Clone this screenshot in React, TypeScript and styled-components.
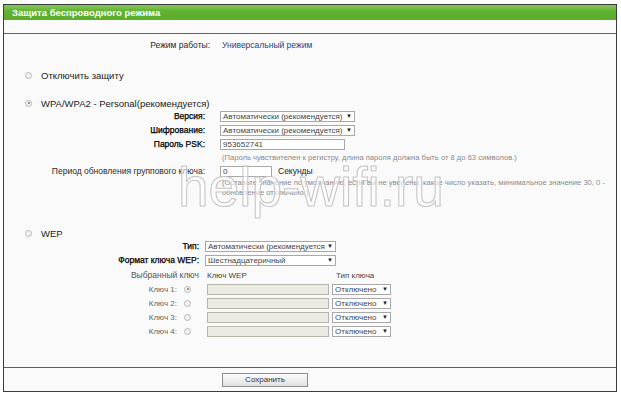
import React from 'react';
import styled, { createGlobalStyle } from 'styled-components';

const GlobalStyle = createGlobalStyle`
  html, body {
    margin: 0;
    padding: 0;
    background: #ffffff;
  }
  body {
    font-family: "Liberation Sans", Arial, sans-serif;
    color: #222;
  }
`;

const Page = styled.div`
  padding: 4px 0 0 3px;
`;

const Frame = styled.div`
  position: relative;
  width: 614px;
  height: 388px;
  box-sizing: border-box;
  border: 1px solid #3c3c3c;
  background: #fafafa;
  display: flex;
  flex-direction: column;
  overflow: hidden;
`;

const Header = styled.div`
  height: 15px;
  line-height: 15px;
  padding-left: 8px;
  background: linear-gradient(#86c85a, #62b232 40%, #5cad2c);
  color: #ffffff;
  font-size: 9.5px;
  font-weight: bold;
`;

const Separator = styled.div<{ $top: number }>`
  margin-top: ${(p) => p.$top}px;
  border-top: 1px solid #4d6b4d;
`;

const Row = styled.div<{ $labelW: number; $gap: number; $top?: number }>`
  display: grid;
  grid-template-columns: ${(p) => p.$labelW}px auto;
  column-gap: ${(p) => p.$gap}px;
  align-items: center;
  height: 14px;
  margin-top: ${(p) => p.$top ?? 0}px;
  font-size: 8.5px;
`;

const Label = styled.div<{ $strong?: boolean; $muted?: boolean }>`
  text-align: right;
  white-space: nowrap;
  color: ${(p) => (p.$strong ? '#000' : p.$muted ? '#555' : '#2a2a2a')};
  -webkit-text-stroke: ${(p) => (p.$strong ? '0.25px #000' : '0')};
`;

const Value = styled.div`
  color: #24468a;
  font-size: 8.5px;
`;

const Field = styled.div`
  display: flex;
  align-items: center;
  gap: 6px;
  white-space: nowrap;
`;

const Heading = styled.div<{ $top: number }>`
  display: flex;
  align-items: center;
  gap: 9px;
  height: 12px;
  margin-top: ${(p) => p.$top}px;
  padding-left: 21px;
  font-size: 9.5px;
  color: #222;
`;

const Radio = styled.span<{ $checked?: boolean }>`
  display: inline-block;
  position: relative;
  width: 5px;
  height: 5px;
  border-radius: 50%;
  border: 1px solid #b8b8b8;
  background: #f2f2f2;
  &::after {
    content: '';
    display: ${(p) => (p.$checked ? 'block' : 'none')};
    position: absolute;
    left: 1.5px;
    top: 1.5px;
    width: 2px;
    height: 2px;
    border-radius: 50%;
    background: #777;
  }
`;

const SelectBox = styled.div<{ $w: number }>`
  width: ${(p) => p.$w}px;
  height: 11px;
  box-sizing: border-box;
  border: 1px solid #a8a8a8;
  background: #ffffff;
  display: flex;
  align-items: center;
  font-size: 8px;
  color: #444;
  padding-left: 2px;
  overflow: hidden;
  span {
    flex: 1;
    overflow: hidden;
    white-space: nowrap;
  }
  b {
    width: 10px;
    font-size: 6px;
    text-align: center;
    color: #222;
  }
`;

const TextBox = styled.div<{ $w: number; $disabled?: boolean }>`
  width: ${(p) => p.$w}px;
  height: 11px;
  box-sizing: border-box;
  border: 1px solid ${(p) => (p.$disabled ? '#b5b5ac' : '#a8a8a8')};
  background: ${(p) => (p.$disabled ? '#ebebe4' : '#ffffff')};
  font-size: 8px;
  line-height: 9px;
  padding-left: 2px;
  color: #444;
`;

const Hint = styled.div<{ $indent: number }>`
  padding-left: ${(p) => p.$indent}px;
  max-width: 392px;
  font-size: 7.6px;
  line-height: 10px;
  color: #8a8a8a;
`;

const HintRow = styled.div`
  height: 13px;
  display: flex;
  align-items: center;
`;

const KeyCell = styled.div`
  display: flex;
  align-items: center;
  justify-content: flex-end;
  gap: 7px;
  font-size: 8px;
  color: #666;
  white-space: nowrap;
`;

const KeyFields = styled.div`
  display: flex;
  align-items: center;
  gap: 3px;
`;

const ColumnTitle = styled.span<{ $w?: number }>`
  width: ${(p) => (p.$w ? `${p.$w}px` : 'auto')};
  font-size: 8px;
  color: #444;
`;

const Footer = styled.div`
  flex: 1;
  display: flex;
  align-items: center;
  padding-left: 218px;
`;

const SaveButton = styled.button`
  width: 86px;
  height: 14px;
  padding: 0;
  border: 1px solid #8d8d8d;
  background: linear-gradient(#fbfbfb, #e2e2e2);
  font-family: "Liberation Sans", Arial, sans-serif;
  font-size: 8px;
  color: #333;
`;

const Watermark = styled.div`
  position: absolute;
  left: 174px;
  top: 155px;
  font-size: 55px;
  line-height: 55px;
  color: rgba(255, 255, 255, 0.55);
  -webkit-text-stroke: 1px #c4c4c4;
  pointer-events: none;
  white-space: nowrap;
`;

const Select = ({ w, text }: { w: number; text: string }) => (
  <SelectBox $w={w}>
    <span>{text}</span>
    <b>▼</b>
  </SelectBox>
);

const keys = [1, 2, 3, 4];

const App = () => {
  return (
    <Page>
      <GlobalStyle />
      <Frame>
        <Header>Защита беспроводного режима</Header>
        <Separator $top={13} />

        <Row $labelW={206} $gap={12} $top={4}>
          <Label>Режим работы:</Label>
          <Value>Универсальный режим</Value>
        </Row>

        <Heading $top={17}>
          <Radio />
          Отключить защиту
        </Heading>

        <Heading $top={16}>
          <Radio $checked />
          WPA/WPA2 - Personal(рекомендуется)
        </Heading>
        <Row $labelW={201} $gap={15}>
          <Label $strong>Версия:</Label>
          <Select w={135} text="Автоматически (рекомендуется)" />
        </Row>
        <Row $labelW={201} $gap={15}>
          <Label $strong>Шифрование:</Label>
          <Select w={135} text="Автоматически (рекомендуется)" />
        </Row>
        <Row $labelW={201} $gap={15}>
          <Label $strong>Пароль PSK:</Label>
          <TextBox $w={125}>953652741</TextBox>
        </Row>
        <HintRow>
          <Hint $indent={218}>
            (Пароль чувствителен к регистру, длина пароля должна быть от 8 до 63 символов.)
          </Hint>
        </HintRow>
        <Row $labelW={201} $gap={15}>
          <Label>Период обновления группового ключа:</Label>
          <Field>
            <TextBox $w={52}>0</TextBox>
            <span>Секунды</span>
          </Field>
        </Row>
        <Hint $indent={218}>
          (Оставьте значение по умолчанию, если вы не уверены, какое число указать, минимальное значение 30, 0 - обновление отключено.)
        </Hint>

        <Heading $top={29}>
          <Radio />
          WEP
        </Heading>
        <Row $labelW={195} $gap={6}>
          <Label $strong>Тип:</Label>
          <Select w={131} text="Автоматически (рекомендуется" />
        </Row>
        <Row $labelW={195} $gap={6}>
          <Label $strong>Формат ключа WEP:</Label>
          <Select w={131} text="Шестнадцатеричный" />
        </Row>
        <Row $labelW={195} $gap={8} $top={1}>
          <Label $muted>Выбранный ключ</Label>
          <KeyFields>
            <ColumnTitle $w={126}>Ключ WEP</ColumnTitle>
            <ColumnTitle>Тип ключа</ColumnTitle>
          </KeyFields>
        </Row>
        {keys.map((k) => (
          <Row key={k} $labelW={187} $gap={16}>
            <KeyCell>
              Ключ {k}:
              <Radio $checked={k === 1} />
            </KeyCell>
            <KeyFields>
              <TextBox $w={122} $disabled />
              <Select w={59} text="Отключено" />
            </KeyFields>
          </Row>
        ))}

        <Separator $top={29} />
        <Footer>
          <SaveButton>Сохранить</SaveButton>
        </Footer>

        <Watermark>help-wifi.ru</Watermark>
      </Frame>
    </Page>
  );
};

export default App;
